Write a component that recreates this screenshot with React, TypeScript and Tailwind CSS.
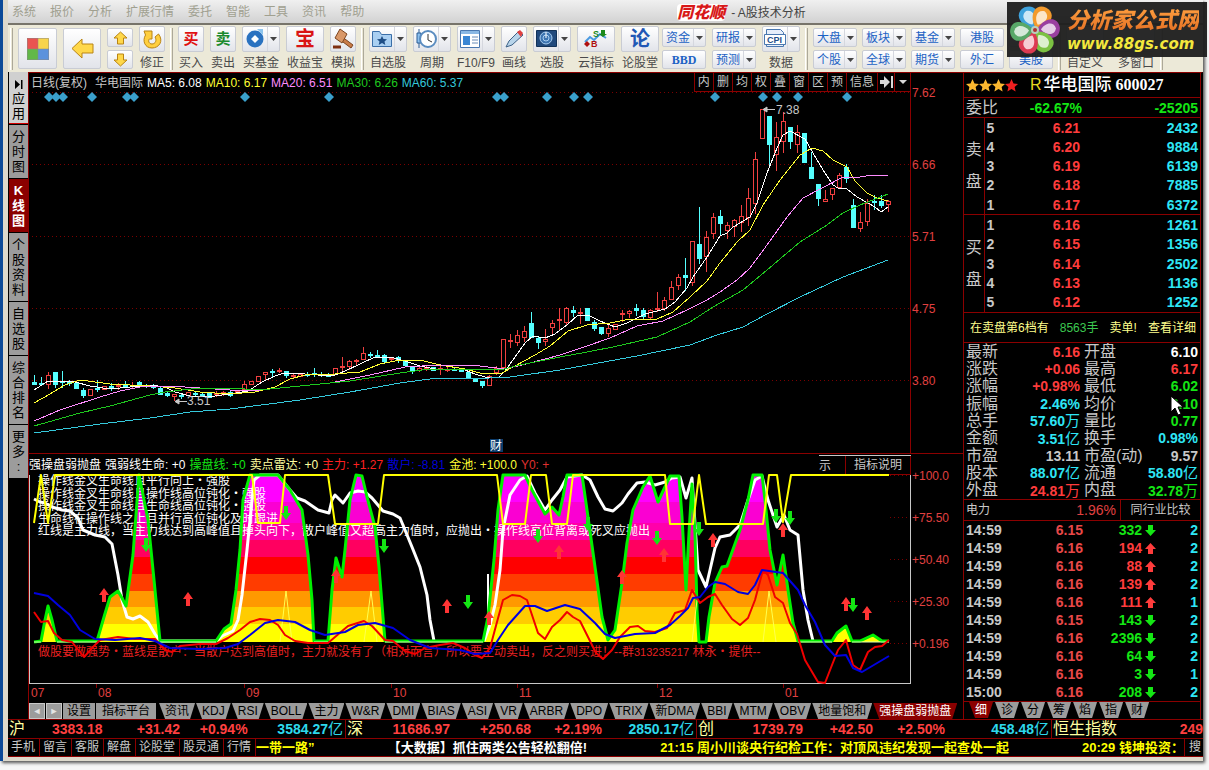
import type { ReactNode } from 'react'

type Point = [number, number]

const cjk = "font-['Liberation_Sans','Noto_Sans_CJK_SC',sans-serif]"

const menus = ['系统', '报价', '分析', '扩展行情', '委托', '智能', '工具', '资讯', '帮助']

const sideTabs = [
  { label: '分时图', active: false },
  { label: 'K线图', active: true },
  { label: '个股资料', active: false },
  { label: '自选股', active: false },
  { label: '综合排名', active: false },
  { label: '更多:', active: false },
]

// kind (u = rising, d = falling), high, body top, body bottom, low
type Candle = ['u' | 'd', number, number, number, number]

const candles: Candle[] = [
  ['d', 375, 382, 384, 384], ['d', 377, 383, 384, 384], ['u', 372, 375, 384, 388], ['d', 372, 372, 384, 387],
  ['d', 371, 381, 382, 387], ['d', 380, 382, 383, 385], ['d', 383, 383, 388, 388], ['d', 388, 390, 395, 397],
  ['u', 389, 389, 395, 395], ['d', 380, 388, 389, 391], ['u', 386, 386, 389, 389], ['d', 383, 386, 387, 390],
  ['u', 383, 385, 386, 389], ['d', 381, 385, 387, 387], ['u', 382, 385, 386, 388], ['d', 381, 382, 384, 387],
  ['d', 384, 385, 386, 387], ['d', 384, 386, 387, 388], ['d', 387, 388, 394, 394], ['d', 392, 393, 395, 396],
  ['u', 394, 394, 396, 400], ['d', 393, 395, 396, 398], ['u', 392, 392, 395, 395], ['d', 392, 393, 394, 396],
  ['d', 392, 394, 396, 396], ['d', 393, 393, 397, 397], ['u', 391, 393, 394, 396], ['u', 391, 392, 394, 395],
  ['d', 391, 392, 395, 396], ['u', 391, 391, 393, 393], ['u', 381, 384, 389, 389], ['u', 381, 381, 384, 384],
  ['u', 376, 376, 381, 381], ['u', 372, 372, 374, 379], ['d', 369, 371, 372, 376], ['u', 368, 370, 371, 372],
  ['d', 371, 371, 375, 377], ['u', 373, 375, 376, 377], ['u', 373, 374, 376, 376], ['d', 372, 374, 375, 376],
  ['d', 368, 373, 374, 376], ['d', 372, 374, 375, 376], ['d', 373, 375, 376, 376], ['u', 368, 368, 374, 374],
  ['u', 357, 366, 367, 370], ['u', 360, 361, 366, 369], ['u', 359, 360, 361, 364], ['u', 347, 353, 359, 359],
  ['d', 352, 354, 355, 357], ['d', 350, 355, 356, 357], ['d', 354, 355, 361, 363], ['u', 357, 358, 359, 361],
  ['d', 356, 357, 359, 362], ['d', 360, 361, 365, 366], ['d', 366, 367, 370, 373], ['u', 365, 368, 370, 371],
  ['u', 366, 367, 368, 370], ['d', 367, 367, 370, 370], ['u', 364, 368, 369, 374], ['u', 367, 369, 370, 371],
  ['d', 368, 369, 370, 370], ['d', 369, 370, 371, 371], ['d', 371, 372, 378, 378], ['d', 378, 378, 381, 381],
  ['d', 381, 381, 385, 387], ['u', 375, 376, 385, 385], ['u', 366, 368, 372, 374], ['u', 339, 339, 367, 367],
  ['u', 334, 340, 341, 347], ['u', 330, 335, 342, 345], ['u', 326, 331, 337, 341], ['d', 312, 323, 337, 337],
  ['d', 337, 338, 342, 348], ['u', 329, 339, 341, 345], ['u', 320, 323, 327, 333], ['u', 308, 319, 320, 330],
  ['u', 307, 308, 322, 325], ['d', 306, 310, 312, 316], ['u', 308, 312, 313, 323], ['d', 308, 308, 320, 320],
  ['d', 320, 322, 328, 330], ['d', 327, 327, 333, 334], ['u', 325, 328, 333, 336], ['u', 324, 324, 329, 329],
  ['u', 310, 313, 314, 321], ['u', 310, 311, 313, 317], ['d', 304, 308, 310, 315], ['d', 308, 310, 316, 318],
  ['u', 309, 310, 317, 318], ['u', 292, 308, 309, 311], ['u', 297, 300, 308, 310], ['u', 281, 287, 299, 299],
  ['u', 274, 277, 285, 289], ['d', 258, 275, 277, 290], ['u', 241, 241, 282, 285], ['d', 207, 244, 258, 263],
  ['u', 231, 237, 256, 271], ['u', 213, 217, 233, 238], ['d', 210, 216, 223, 234], ['u', 222, 225, 230, 238],
  ['u', 219, 220, 226, 236], ['u', 205, 216, 222, 231], ['u', 188, 198, 217, 225], ['u', 152, 159, 203, 213],
  ['u', 109, 109, 138, 138], ['d', 116, 116, 144, 165], ['u', 122, 137, 154, 170], ['u', 112, 121, 141, 152],
  ['d', 127, 127, 141, 148], ['u', 125, 132, 144, 152], ['d', 133, 133, 162, 162], ['d', 152, 167, 178, 178],
  ['d', 184, 184, 198, 205], ['u', 190, 199, 201, 201], ['u', 188, 188, 194, 199], ['u', 173, 175, 187, 187],
  ['d', 164, 167, 178, 182], ['d', 199, 205, 227, 227], ['u', 212, 222, 228, 231], ['u', 199, 203, 221, 225],
  ['d', 195, 201, 202, 209], ['d', 195, 201, 205, 207], ['u', 200, 201, 204, 211],
]

const averages: { color: string; points: Point[] }[] = [
  {
    color: '#fff',
    points: [
      [34, 390], [48, 381], [63, 381], [75, 382], [90, 386], [110, 389], [130, 387], [150, 385], [165, 387], [175, 392],
      [190, 396], [215, 396], [230, 394], [248, 391], [262, 382], [275, 376], [284, 373], [305, 374], [318, 375], [335, 375],
      [345, 371], [360, 364], [375, 357], [390, 357], [405, 361], [420, 366], [435, 369], [465, 370], [475, 374], [485, 377],
      [498, 378], [505, 371], [515, 357], [525, 343], [533, 336], [545, 338], [555, 334], [568, 324], [578, 315], [588, 315],
      [600, 321], [615, 327], [627, 323], [645, 314], [665, 309], [675, 302], [687, 288], [693, 277], [707, 257], [720, 236],
      [727, 233], [733, 227], [750, 217], [757, 203], [767, 173], [777, 148], [783, 135], [790, 131], [805, 139], [813, 153],
      [823, 170], [833, 185], [838, 188], [847, 189], [857, 197], [868, 203], [875, 207], [881, 212], [888, 207],
    ],
  },
  {
    color: '#ff3',
    points: [
      [34, 403], [50, 394], [65, 385], [80, 380], [110, 384], [150, 386], [175, 388], [200, 392], [230, 394], [255, 392],
      [275, 387], [290, 379], [305, 375], [335, 374], [360, 372], [380, 364], [395, 361], [420, 360], [440, 365], [465, 369],
      [480, 373], [500, 374], [515, 366], [535, 355], [550, 346], [568, 331], [587, 325], [610, 323], [630, 319], [657, 319],
      [673, 312], [690, 297], [707, 281], [720, 263], [737, 242], [750, 230], [763, 205], [780, 180], [800, 155], [812, 148],
      [823, 151], [833, 160], [847, 167], [855, 181], [867, 193], [877, 198], [888, 201],
    ],
  },
  {
    color: '#ff8cff',
    points: [
      [34, 421], [60, 410], [100, 397], [120, 391], [140, 387], [170, 386], [230, 390], [260, 390], [290, 387], [330, 383],
      [370, 375], [405, 367], [440, 365], [480, 366], [505, 369], [530, 363], [560, 355], [587, 346], [610, 338], [637, 326],
      [663, 321], [687, 310], [707, 300], [720, 292], [737, 280], [750, 268], [767, 245], [787, 217], [803, 198], [820, 189],
      [843, 177], [860, 177], [873, 175], [888, 175],
    ],
  },
  {
    color: '#1fc81f',
    points: [
      [34, 426], [80, 413], [110, 406], [150, 395], [165, 392], [200, 388], [230, 388], [260, 390], [300, 386], [350, 381],
      [400, 373], [430, 369], [470, 369], [500, 370], [520, 365], [560, 357], [587, 352], [613, 347], [657, 337], [690, 322],
      [713, 307], [743, 290], [767, 270], [800, 242], [827, 225], [843, 213], [860, 205], [888, 194],
    ],
  },
  {
    color: '#35c9dc',
    points: [
      [34, 433], [100, 424], [150, 418], [190, 412], [230, 409], [300, 400], [350, 392], [400, 383], [430, 379], [490, 378],
      [510, 377], [560, 370], [593, 364], [637, 356], [690, 345], [717, 335], [743, 327], [767, 314], [800, 297], [843, 277],
      [888, 260],
    ],
  },
]

const eventMarks = [49, 56, 63, 92, 127, 134, 245, 329, 497, 504, 547, 574, 588, 715, 763, 777, 798, 847]

const priceTicks = [
  { y: 92, label: '7.62' },
  { y: 164, label: '6.66' },
  { y: 236, label: '5.71' },
  { y: 308, label: '4.75' },
  { y: 380, label: '3.80' },
]

const strength: Point[] = [
  [34, 642], [41, 641], [45, 620], [48, 606], [52, 620], [57, 641], [97, 641], [104, 617], [110, 597], [118, 591],
  [122, 598], [126, 606], [133, 555], [139, 475], [148, 520], [154, 580], [160, 641], [216, 641], [224, 629], [231, 624],
  [236, 590], [240, 550], [243, 500], [250, 475], [278, 475], [290, 490], [302, 510], [308, 555], [312, 600], [314, 641],
  [328, 641], [332, 590], [336, 558], [342, 577], [345, 550], [350, 500], [356, 475], [362, 476], [367, 497], [375, 527],
  [379, 567], [383, 617], [385, 641], [483, 641], [488, 617], [494, 560], [498, 510], [503, 475], [525, 475], [532, 490],
  [545, 514], [552, 507], [559, 515], [563, 497], [567, 475], [582, 475], [588, 517], [595, 567], [602, 617], [608, 640],
  [615, 630], [622, 583], [627, 543], [633, 510], [643, 487], [650, 476], [658, 502], [670, 476], [679, 476], [682, 517],
  [686, 590], [689, 533], [692, 484], [695, 533], [697, 610], [699, 642], [706, 642], [709, 617], [715, 583], [722, 567],
  [727, 566], [740, 530], [748, 500], [753, 475], [762, 475], [765, 500], [770, 550], [777, 585], [783, 555], [788, 590],
  [793, 623], [798, 641], [832, 641], [837, 633], [846, 626], [852, 641], [860, 641], [873, 635], [882, 641], [889, 641],
]

const lifeLine: Point[] = [
  [34, 499], [40, 502], [45, 503], [52, 507], [62, 510], [70, 511], [78, 518], [83, 530], [95, 535], [105, 537],
  [112, 544], [118, 575], [122, 600], [127, 617], [133, 619], [140, 616], [148, 622], [155, 634], [160, 641], [216, 641],
  [222, 636], [233, 631], [238, 620], [242, 595], [247, 550], [250, 520], [254, 480], [260, 475], [278, 475], [290, 490],
  [297, 498], [305, 501], [318, 510], [329, 513], [332, 500], [335, 495], [343, 503], [350, 493], [358, 491], [365, 492],
  [372, 498], [383, 511], [393, 514], [400, 518], [405, 530], [412, 547], [420, 567], [427, 595], [430, 620], [434, 641],
  [484, 641], [490, 625], [495, 605], [500, 570], [503, 530], [510, 495], [520, 480], [527, 476], [535, 493], [545, 510],
  [552, 500], [560, 490], [567, 477], [582, 475], [590, 480], [598, 497], [605, 509], [613, 511], [622, 503], [628, 494],
  [637, 483], [645, 482], [655, 485], [665, 482], [672, 478], [680, 477], [686, 498], [692, 478], [698, 570], [706, 587],
  [710, 570], [715, 548], [720, 537], [730, 535], [740, 525], [748, 500], [755, 480], [762, 476], [768, 500], [777, 527],
  [784, 515], [790, 530], [798, 535], [803, 590], [808, 620], [813, 641],
]

const goldPool: Point[] = [
  [34, 523], [41, 475], [48, 523], [55, 475], [252, 475], [258, 523], [280, 523], [285, 475], [328, 475], [335, 524],
  [378, 524], [384, 475], [497, 475], [503, 524], [525, 524], [531, 475], [546, 475], [552, 524], [567, 524], [573, 475],
  [665, 475], [670, 524], [693, 524], [699, 475], [706, 524], [763, 524], [769, 475], [777, 475], [783, 522], [791, 475],
  [889, 475],
]

const mainForce: Point[] = [
  [34, 612], [41, 622], [48, 621], [54, 633], [62, 640], [72, 642], [84, 657], [95, 645], [100, 640], [118, 637],
  [135, 639], [155, 639], [165, 650], [172, 652], [180, 646], [200, 644], [216, 644], [228, 638], [240, 630], [250, 622],
  [260, 619], [270, 620], [278, 625], [285, 635], [295, 641], [308, 643], [328, 643], [335, 637], [348, 626], [364, 621],
  [372, 626], [385, 640], [393, 641], [405, 651], [415, 654], [425, 648], [440, 645], [453, 643], [465, 648], [475, 655],
  [482, 658], [490, 648], [497, 622], [503, 600], [512, 595], [520, 596], [527, 600], [533, 618], [538, 633], [545, 639],
  [552, 627], [560, 620], [567, 612], [573, 617], [580, 621], [588, 637], [596, 653], [603, 659], [612, 650], [620, 637],
  [630, 627], [638, 626], [645, 631], [655, 632], [667, 628], [675, 613], [685, 610], [692, 590], [700, 603], [708, 597],
  [715, 594], [722, 605], [732, 619], [740, 625], [748, 618], [755, 600], [763, 570], [768, 575], [775, 597], [783, 603],
  [790, 623], [797, 634], [805, 660], [818, 682], [825, 683], [832, 665], [838, 650], [846, 640], [853, 665], [860, 670],
  [868, 652], [875, 647], [882, 646], [889, 640],
]

const retail: Point[] = [
  [34, 593], [48, 596], [58, 605], [70, 615], [80, 630], [95, 639], [115, 640], [140, 638], [155, 641], [170, 648],
  [200, 649], [225, 648], [238, 644], [250, 635], [265, 623], [278, 620], [295, 622], [310, 630], [325, 635], [345, 632],
  [358, 625], [375, 623], [393, 628], [410, 640], [430, 648], [460, 650], [475, 654], [490, 653], [498, 640], [508, 625],
  [525, 606], [535, 606], [547, 611], [565, 605], [580, 609], [595, 623], [605, 634], [615, 638], [635, 634], [655, 633],
  [670, 625], [680, 616], [688, 608], [693, 598], [700, 597], [708, 587], [715, 582], [725, 584], [738, 592], [748, 594],
  [755, 585], [762, 570], [783, 573], [798, 590], [805, 605], [815, 622], [825, 645], [835, 656], [846, 655], [853, 668],
  [862, 672], [889, 656],
]

const bands = [
  { y: 474, h: 28, color: '#ff00ff' },
  { y: 502, h: 21, color: '#fa00d2' },
  { y: 523, h: 17, color: '#ff00aa' },
  { y: 540, h: 17, color: '#ff0060' },
  { y: 557, h: 17, color: '#ff0000' },
  { y: 574, h: 17, color: '#ff3c00' },
  { y: 591, h: 16, color: '#ff9900' },
  { y: 607, h: 17, color: '#ffcc00' },
  { y: 624, h: 18, color: '#ffff00' },
]

const upArrows: Point[] = [
  [104, 595], [188, 599], [336, 576], [447, 606], [489, 618], [559, 552], [664, 555], [622, 577], [713, 540], [783, 530],
  [846, 604], [867, 613],
]

const downArrows: Point[] = [
  [146, 545], [286, 513], [384, 546], [468, 602], [538, 536], [588, 524], [657, 538], [699, 529], [776, 516], [790, 518],
  [853, 605],
]

const oscTicks = [
  { y: 475, label: '+100.0' },
  { y: 517, label: '+75.50' },
  { y: 559, label: '+50.40' },
  { y: 601, label: '+25.30' },
  { y: 643, label: '+0.196' },
]

const months = [
  { x: 30, label: '07' },
  { x: 97, label: '08' },
  { x: 245, label: '09' },
  { x: 392, label: '10' },
  { x: 518, label: '11' },
  { x: 658, label: '12' },
  { x: 784, label: '01' },
]

const notes = [
  '操作线金叉生命线且平行向上・强股',
  '操作线金叉生命线且操作线高位钝化・强股',
  '操作线金叉生命线且生命线高位钝化・强股',
  '生命线在操作线之上且并行高位钝化及时跟进',
  '红线是主力线，当主力线达到高峰值且掉头向下，散户峰值又超高主力值时，应抛出・操作线高位背离或死叉应抛出',
]

const indicatorTabs = [
  '资讯', 'KDJ', 'RSI', 'BOLL', '主力', 'W&R', 'DMI', 'BIAS', 'ASI', 'VR', 'ARBR', 'DPO', 'TRIX', '新DMA', 'BBI', 'MTM',
  'OBV', '地量饱和',
]

const asks = [
  ['5', '6.21', '2432'],
  ['4', '6.20', '9884'],
  ['3', '6.19', '6139'],
  ['2', '6.18', '7885'],
  ['1', '6.17', '6372'],
]

const bids = [
  ['1', '6.16', '1261'],
  ['2', '6.15', '1356'],
  ['3', '6.14', '2502'],
  ['4', '6.13', '1136'],
  ['5', '6.12', '1252'],
]

const red = 'text-[#ff3c3c]'
const green = 'text-[#14e614]'
const cyan = 'text-[#2ee6f5]'
const gray = 'text-[#c8c8c8]'

const stats = [
  ['最新', '6.16', red, '开盘', '6.10', 'text-white'],
  ['涨跌', '+0.06', red, '最高', '6.17', red],
  ['涨幅', '+0.98%', red, '最低', '6.02', green],
  ['振幅', '2.46%', cyan, '均价', '6.10', green],
  ['总手', '57.60万', cyan, '量比', '0.77', green],
  ['金额', '3.51亿', cyan, '换手', '0.98%', cyan],
  ['市盈', '13.11', gray, '市盈(动)', '9.57', gray],
  ['股本', '88.07亿', cyan, '流通', '58.80亿', cyan],
  ['外盘', '24.81万', red, '内盘', '32.78万', green],
]

const trades = [
  { time: '14:59', price: '6.15', volume: '332', up: false, count: '2' },
  { time: '14:59', price: '6.16', volume: '194', up: true, count: '2' },
  { time: '14:59', price: '6.16', volume: '88', up: true, count: '2' },
  { time: '14:59', price: '6.16', volume: '139', up: true, count: '2' },
  { time: '14:59', price: '6.16', volume: '111', up: true, count: '1' },
  { time: '14:59', price: '6.15', volume: '143', up: false, count: '2' },
  { time: '14:59', price: '6.16', volume: '2396', up: false, count: '2' },
  { time: '14:59', price: '6.16', volume: '64', up: false, count: '2' },
  { time: '14:59', price: '6.16', volume: '3', up: false, count: '1' },
  { time: '15:00', price: '6.16', volume: '208', up: false, count: '2' },
]

const indices = [
  { name: '沪', values: ['3383.18', '+31.42', '+0.94%'], amount: '3584.27', cols: 'grid-cols-[16px_78fr_78fr_68fr_96fr]' },
  { name: '深', values: ['11686.97', '+250.68', '+2.19%'], amount: '2850.17', cols: 'grid-cols-[16px_87fr_81fr_71fr_92fr]' },
  { name: '创', values: ['1739.79', '+42.50', '+2.50%'], amount: '458.48', cols: 'grid-cols-[16px_89fr_70fr_72fr_104fr]' },
]

const toPath = (points: Point[]) => points.map(([x, y]) => `${x},${y}`).join(' ')

function Separator() {
  return <span className="-mx-px h-[42px] w-[3px] shrink-0 self-center border-x border-l-white border-r-[#aca899]" />
}

const faceStyle = 'rounded-[2px] border border-[#c9ccd4] bg-linear-to-b from-white to-[#e2e4ea]'

function Caret() {
  return (
    <span className="flex w-3 shrink-0 items-center justify-center self-stretch border-l border-[#d5d7de]">
      <svg width="7" height="4" viewBox="0 0 7 4"><path d="M0 0h7L3.5 4z" fill="#444" /></svg>
    </span>
  )
}

function Tool({ label, caret, children }: { label: string; caret?: boolean; children: ReactNode }) {
  const width = caret || label.length > 2 ? 'w-[38px]' : 'w-[26px]'
  return (
    <button type="button" className={`flex shrink-0 flex-col items-center gap-0.5 text-xs leading-[18px] whitespace-nowrap text-[#4a4a4a] ${width}`}>
      <span className={`flex h-[26px] w-full items-center ${faceStyle}`}>
        <span className="flex flex-1 items-center justify-center">{children}</span>
        {caret && <Caret />}
      </span>
      {label}
    </button>
  )
}

function SmallTool({ label, caret = true }: { label: string; caret?: boolean }) {
  return (
    <button type="button" className={`flex h-[19px] w-11 items-center text-xs leading-none text-[#1c62c4] ${faceStyle}`}>
      <span className={`flex-1 text-center whitespace-nowrap ${label === 'BBD' ? "font-['Liberation_Serif',serif] font-bold" : ''}`}>{label}</span>
      {caret && <Caret />}
    </button>
  )
}

function ToolPair({ top, bottom, caret = true, caretBottom = caret }: { top: string; bottom: string; caret?: boolean; caretBottom?: boolean }) {
  return (
    <div className="flex shrink-0 flex-col gap-[3px]">
      <SmallTool label={top} caret={caret} />
      <SmallTool label={bottom} caret={caretBottom} />
    </div>
  )
}

function VerticalArrow({ down }: { down?: boolean }) {
  return (
    <svg width="15" height="14" viewBox="0 0 15 14" className={down ? 'rotate-180' : ''}>
      <path d="M7.5 1 14 7h-3.5v6h-6V7H1z" fill="#ffd84a" stroke="#b98414" />
    </svg>
  )
}

function Toolbar() {
  return (
    <div className="flex h-[49px] items-center overflow-hidden border-t-2 border-[#77746a] bg-[#ece9d8] pl-[3px]">
      <div className="flex items-center gap-[6px]">
        <Separator />
        <button type="button" aria-label="主页" className={`flex h-[41px] w-[39px] items-center justify-center ${faceStyle}`}>
          <svg width="22" height="22" viewBox="0 0 22 22">
            <path d="M0 0h11v11H0z" fill="#ea5450" />
            <path d="M11 0h11v11H11z" fill="#f8d44c" />
            <path d="M0 11h11v11H0z" fill="#62b848" />
            <path d="M11 11h11v11H11z" fill="#5c92dc" />
            <path d="M.5.5h21v21H.5zM11 0v22M0 11h22" fill="none" stroke="#888" strokeOpacity=".5" />
          </svg>
        </button>
        <button type="button" aria-label="后退" className={`flex h-[41px] w-[38px] items-center justify-center ${faceStyle}`}>
          <svg width="23" height="21" viewBox="0 0 23 21">
            <path d="M1 10.5 11 1v5h11v9H11v5z" fill="#ffd84a" stroke="#b98414" />
          </svg>
        </button>
        <div className="flex w-[26px] flex-col gap-[3px]">
          <button type="button" aria-label="上一个" className={`flex h-[19px] items-center justify-center ${faceStyle}`}><VerticalArrow /></button>
          <button type="button" aria-label="下一个" className={`flex h-[19px] items-center justify-center ${faceStyle}`}><VerticalArrow down /></button>
        </div>
        <Tool label="修正">
          <svg width="20" height="20" viewBox="0 0 20 20">
            <path
              d="M2 2h8v8H7.500C6 11 6.500 15 10 15s5-4 3-7l3.500-3C22 12 17 19 10 19S0 12 3.500 6z"
              fill="#ffcf3f"
              stroke="#b98414"
            />
          </svg>
        </Tool>
        <Separator />
        <Tool label="买入"><b className="text-[15px] leading-none text-[#e01010]">买</b></Tool>
        <Tool label="卖出"><b className="text-[15px] leading-none text-[#1a8a2e]">卖</b></Tool>
        <Tool label="买基金" caret>
          <svg width="18" height="19" viewBox="0 0 18 19">
            <circle cx="9" cy="10" r="8.5" fill="#2a72c0" />
            <path d="M11 0h6v6z" fill="#8cc4ee" />
            <path d="m9 6 4 4-4 4-4-4z" fill="#fff" />
          </svg>
        </Tool>
        <Tool label="收益宝"><b className="text-xl leading-none text-[#d91414]">宝</b></Tool>
        <Tool label="模拟">
          <svg width="22" height="21" viewBox="0 0 22 21">
            <path d="m9 8 12 9-2 3L7 11z" fill="#c87b48" stroke="#7d4520" />
            <path d="m8 1 7 5-5 9-7-5z" fill="#d99868" stroke="#7d4520" />
            <path d="M1 19h8" stroke="#7d2f12" strokeWidth="3" />
          </svg>
        </Tool>
        <Separator />
        <Tool label="自选股" caret>
          <svg width="20" height="19" viewBox="0 0 20 19">
            <path d="M.5 2.5h7l2 3h10v12H.5z" fill="#a9cff2" stroke="#3a6ea8" />
            <path d="m10 7 1.500 3 3.500.3-2.500 2.200.8 3.500-3.300-2-3.300 2 .8-3.500L5 10.300l3.500-.3z" fill="#1f4e86" />
          </svg>
        </Tool>
        <Tool label="周期" caret>
          <svg width="21" height="20" viewBox="0 0 21 20">
            <path d="M3 0v19" stroke="#2a5c94" />
            <path d="M1 4h4v10H1z" fill="#8cc0ee" stroke="#2a5c94" />
            <circle cx="12" cy="10" r="8" fill="#fff" stroke="#5a8cc0" strokeWidth="2" />
            <path d="M12 5v6l4 2" fill="none" stroke="#333" />
          </svg>
        </Tool>
        <Tool label="F10/F9" caret>
          <svg width="20" height="18" viewBox="0 0 20 18">
            <path d="M.5.5h19v17H.5z" fill="#fff" stroke="#4a78b0" />
            <path d="M1 1h18v3H1z" fill="#8ab8e4" />
            <path d="M3 6h7v9H3z" fill="#3a86d4" />
            <path d="M12 7h6M12 10h6M12 13h6" stroke="#6a8cb8" />
          </svg>
        </Tool>
        <Tool label="画线">
          <svg width="20" height="20" viewBox="0 0 20 20">
            <path d="M15 2 5 12l-3 6 6-2L19 6z" fill="#b8d4ea" stroke="#3e6288" />
            <path d="m13 3 3-2 3 3-2 4z" fill="#e04040" />
          </svg>
        </Tool>
        <Tool label="选股" caret>
          <svg width="21" height="17" viewBox="0 0 21 17">
            <path d="M.5.5h20v16H.5z" fill="#20497c" stroke="#123258" />
            <circle cx="10" cy="8" r="6" fill="#3d74b0" stroke="#a9cff2" />
            <circle cx="10" cy="8" r="3" fill="none" stroke="#a9cff2" />
            <path d="M10 8V2" stroke="#fff" />
          </svg>
        </Tool>
        <Tool label="云指标">
          <svg width="26" height="22" viewBox="0 0 26 22" className="overflow-visible">
            <path d="M2 14 7 9l4 3 6-6 6 4" fill="none" stroke="#4a9ae0" strokeWidth="2" />
            <text x="10" y="9" fontSize="9" fontWeight="700" fill="#1c8a1c">S</text>
            <path d="M18 2h4v4h2l-4 3-4-3h2z" fill="#1c8a1c" />
            <text x="8" y="19" fontSize="9" fontWeight="700" fill="#b01010">B</text>
            <path d="m1 16 3-3 3 3-3 3z" fill="#b01010" />
          </svg>
        </Tool>
        <Tool label="论股堂"><b className="text-xl leading-none text-[#2157b5]">论</b></Tool>
      </div>
      <div className="ml-[3px] flex items-center gap-[6px]">
        <ToolPair top="资金" bottom="BBD" caretBottom={false} />
        <ToolPair top="研报" bottom="预测" />
        <Tool label="数据" caret>
          <svg width="22" height="20" viewBox="0 0 22 20">
            <path d="M2.5.5h14l3 3v14h-17z" fill="#e6eefa" stroke="#4a78b0" />
            <path d="M.5 5.5h21v10H.5z" fill="#fff" stroke="#4a78b0" />
            <text x="3" y="14" fontSize="9" fontWeight="700" fill="#24508c">CPI</text>
          </svg>
        </Tool>
        <Separator />
        <div className="flex items-center gap-[5px]">
          <ToolPair top="大盘" bottom="个股" />
          <ToolPair top="板块" bottom="全球" />
          <ToolPair top="基金" bottom="期货" />
          <ToolPair top="港股" bottom="外汇" caret={false} />
          <ToolPair top="指数" bottom="美股" caret={false} />
        </div>
        <Separator />
        <Tool label="自定义">{null}</Tool>
        <span className="w-px" />
        <Tool label="多窗口">{null}</Tool>
        <Separator />
      </div>
    </div>
  )
}

function SiteBadge() {
  const petals = [
    { angle: -25, color: '#3fa2dc' },
    { angle: 27, color: '#f39a2c' },
    { angle: 85, color: '#9a3fa0' },
    { angle: 145, color: '#7cc242' },
    { angle: 205, color: '#dc3a52' },
    { angle: 265, color: '#58a868' },
  ]
  return (
    <div className="absolute top-0.5 right-0.5 flex h-[55px] w-[200px] items-center gap-1.5 bg-[#1e1e1e]/95 pl-0.5">
      <svg width="52" height="52" viewBox="-26 -26 52 52" className="shrink-0">
        {petals.map((p) => (
          <g key={p.angle} transform={`rotate(${p.angle})`}>
            <path d="M0-2C-11-8-14-24 0-25 14-24 11-8 0-2z" fill={p.color} />
            <path d="M0-6C-6-10-8-19 0-21 8-19 6-10 0-6z" fill="#fff" fillOpacity=".75" />
          </g>
        ))}
        <circle r="4" fill="#b8cdbb" />
        <circle r="2" fill="#b03030" />
      </svg>
      <div className="whitespace-nowrap">
        <div className="bg-linear-to-b from-[#ffa040] to-[#e06a20] bg-clip-text text-[22px] leading-[28px] font-black text-transparent italic">分析家公式网</div>
        <div className="font-['DejaVu_Sans',sans-serif] text-[15px] leading-[18px] font-bold text-[#f4e83c] italic">www.88gs.com</div>
      </div>
    </div>
  )
}

function SideBar() {
  return (
    <nav className="flex w-[21px] shrink-0 flex-col gap-px border-r border-[#8b0000] bg-black pl-px text-[13px] leading-[15px]">
      <button type="button" className="flex h-[52px] flex-col items-center border-b border-[#d40000] bg-[#d0d0d0] pt-1.5 text-black">
        <svg width="8" height="9" viewBox="0 0 8 9" className="my-0.5"><path d="M0 0l5 4.5L0 9zM6 0h1.5v9H6z" /></svg>
        <span className="w-[13px] break-all">应用</span>
      </button>
      {sideTabs.map((tab) => (
        <button
          type="button"
          key={tab.label}
          className={`py-1 ${tab.active ? 'bg-[#8b0000] font-bold text-white' : 'bg-[#9c9c9c] text-black'}`}
        >
          {tab.label.split('').map((char) => (
            <span key={char} className="block">{char}</span>
          ))}
        </button>
      ))}
    </nav>
  )
}

function ChartHeader() {
  return (
    <div className="flex h-5 items-center justify-between border-t border-[#8b0000] pr-[52px] text-xs whitespace-nowrap">
      <div className="flex items-center gap-1 pl-0.5">
        <span className="mr-1 text-[#c8c8c8]">日线(复权)</span>
        <span className="text-[#c8c8c8]">华电国际</span>
        <span className="text-white">MA5: 6.08</span>
        <span className="text-[#ff3]">MA10: 6.17</span>
        <span className="text-[#ff8cff]">MA20: 6.51</span>
        <span className="text-[#1fc81f]">MA30: 6.26</span>
        <span className="text-[#35c9dc]">MA60: 5.37</span>
      </div>
      <div className="flex h-full text-[#c8c8c8]">
        {['内', '删', '均', '权', '叠', '窗', '区', '预', '信息'].map((label) => (
          <button type="button" key={label} className="border-b border-l border-[#8b0000] px-[3px]">{label}</button>
        ))}
        <button type="button" aria-label="前进" className="flex w-[17px] items-center justify-center border-b border-l border-[#8b0000]">
          <svg width="13" height="12" viewBox="0 0 13 12" fill="#d8d8d8"><path d="M0 4h4V0l6 6-6 6V8H0zM11 0h2v12h-2z" /></svg>
        </button>
        <button type="button" aria-label="更多" className="flex w-[17px] items-center justify-center border-x border-b border-[#8b0000]">
          <svg width="8" height="4" viewBox="0 0 8 4" fill="#d8d8d8"><path d="M0 0h8L4 4z" /></svg>
        </button>
      </div>
    </div>
  )
}

function PriceChart() {
  return (
    <svg viewBox="29 92 934 363" className="block h-auto w-full overflow-visible" fontSize="12">
      <g shapeRendering="crispEdges">
        {priceTicks.map((tick) => (
          <path key={tick.y} d={`M32 ${tick.y + 0.5}H910`} stroke="#7a0000" strokeDasharray="1 3" />
        ))}
        <path d="M910.5 92V454M29 453.5H963" stroke="#8b0000" />
        {candles.map(([kind, high, top, bottom, low], i) => {
          const x = 34 + i * 7
          const color = kind === 'u' ? '#f04040' : '#5ff'
          return (
            <g key={i} fill={kind === 'u' ? '#000' : color} stroke={color}>
              <path d={`M${x + 0.5} ${high}V${low + 1}`} />
              <rect x={x - 1.5} y={top + 0.5} width="4" height={Math.max(bottom - top, 0.5)} />
            </g>
          )
        })}
        {averages.map((line) => (
          <polyline key={line.color} points={toPath(line.points)} fill="none" stroke={line.color} />
        ))}
      </g>
      {eventMarks.map((x) => (
        <path key={x} d={`M${x} 92l5 5-5 5-5-5z`} fill="#3aa0cc" />
      ))}
      {priceTicks.map((tick) => (
        <text key={tick.y} x="912" y={tick.y + 5} fill="#e04040">{tick.label}</text>
      ))}
      <g fill="#c8c8c8" stroke="#c8c8c8">
        <path d="M763 109.5h12M763 109.5l4-2.5v5zM175 401.5h12M175 401.5l4-2.5v5z" />
        <text x="776" y="114" stroke="none">7.38</text>
        <text x="187" y="405" stroke="none">3.51</text>
      </g>
      <path d="M490 439h13v13h-13z" fill="#0c3c6c" />
      <text x="490" y="450" fill="#fff">财</text>
    </svg>
  )
}

function IndicatorHeader() {
  return (
    <div className="flex h-5 items-center justify-between pr-[52px] text-xs whitespace-nowrap">
      <div className="flex gap-1">
        <span className="text-white">强操盘弱抛盘</span>
        <span className="text-white">强弱线生命: +0</span>
        <span className="text-[#14e614]">操盘线: +0</span>
        <span className="text-[#ffffa0]">卖点雷达: +0</span>
        <span className="text-[#ff2020]">主力: +1.27</span>
        <span className="text-[#0000d8]">散户: -8.81</span>
        <span className="text-[#ff3]">金池: +100.0</span>
        <span className="text-[#e03030]">Y0: +</span>
      </div>
      <div className="flex h-full items-stretch border-t border-[#c8c8c8] text-[#c8c8c8]">
        <span className="flex w-[27px] items-center border-r border-[#8b0000]">示</span>
        <button type="button" className="border-r border-b border-[#8b0000] px-2">指标说明</button>
      </div>
    </div>
  )
}

function IndicatorChart() {
  return (
    <svg viewBox="29 475 934 228" className="block h-auto w-full overflow-visible" fontSize="12">
      <clipPath id="strength-area">
        <polygon points={`34,642 ${toPath(strength)} 889,642`} />
      </clipPath>
      <g shapeRendering="crispEdges">
        <path d="M29.5 475V683.5H910.5V475" fill="none" stroke="#c8c8c8" />
        {oscTicks.map((tick) => (
          <path key={tick.y} d={`M890 ${tick.y + 0.5}H910`} stroke="#7a0000" strokeDasharray="1 3" />
        ))}
        {months.slice(1).map((m) => (
          <path key={m.x} d={`M${m.x - 0.5} 684v4`} stroke="#8b0000" />
        ))}
        <g clipPath="url(#strength-area)">
          {bands.map((band) => (
            <rect key={band.y} x="34" y={band.y} width="856" height={band.h} fill={band.color} />
          ))}
        </g>
      </g>
      <g fill="#fff">
        {notes.map((note, i) => (
          <text key={note} x="38" y={485 + Math.round(i * 12.5)}>{note}</text>
        ))}
      </g>
      <text x="38" y="656" fill="#e82020">
        做股要做强势・蓝线是散户：当散户达到高值时，主力就没有了（相对而言）所以要主动卖出，反之则买进！--群
        <tspan fontSize="11">313235217</tspan> 林永・提供--
      </text>
      <g fill="none" strokeLinejoin="round">
        <polyline points={toPath(lifeLine.slice(0, 50))} stroke="#fff" strokeWidth="3" />
        <polyline points={toPath(lifeLine.slice(50))} stroke="#fff" strokeWidth="3" />
        <path d="M488 574v46" stroke="#fff" strokeWidth="2" />
        <polyline points={toPath(strength)} stroke="#00f000" strokeWidth="3" />
        <path d="M34 642H41M57 642H97M160 642H216M314 642H328M385 642H483M798 642H832M852 642H889" stroke="#d8ffb0" />
        <path d="M280 642 286 591 292 642M364 642 371 591 377 642M692 642 697 600M763 642 769 591 776 642" stroke="#ffff50" />
        <polyline points={toPath(goldPool)} stroke="#ffff00" strokeWidth="2" />
        <polyline points={toPath(mainForce)} stroke="#f00000" strokeWidth="2" />
        <polyline points={toPath(retail)} stroke="#0000e0" strokeWidth="2" />
      </g>
      {upArrows.map(([x, y]) => (
        <path key={`${x}-${y}`} d={`M${x} ${y - 7}l5 7h-3v7h-4v-7h-3z`} fill="#ff3434" />
      ))}
      {downArrows.map(([x, y]) => (
        <path key={`${x}-${y}`} d={`M${x} ${y + 7}l5-7h-3v-7h-4v7h-3z`} fill="#14e614" />
      ))}
      <g fill="#e04040">
        {oscTicks.map((tick) => (
          <text key={tick.y} x="912" y={tick.y + 5}>{tick.label}</text>
        ))}
        {months.map((m) => (
          <text key={m.x} x={m.x + 1} y="697">{m.label}</text>
        ))}
      </g>
    </svg>
  )
}

const slanted = '[clip-path:polygon(1px_0,100%_0,calc(100%-5px)_100%,7px_100%)]'

function SlantedTab({ label, active }: { label: string; active?: boolean }) {
  return (
    <button type="button" className={`pr-1.5 pl-[7px] ${slanted} ${active ? 'bg-[#8b0000] text-white' : 'bg-[#9c9c9c] text-black'}`}>
      {label}
    </button>
  )
}

function IndicatorTabs() {
  return (
    <div className="flex h-4 text-xs leading-4 whitespace-nowrap">
      <div className="mr-0.5 flex gap-px text-black">
        {['◄', '►'].map((label) => (
          <button type="button" key={label} className="w-4 border border-[#c8c8c8] bg-[#9c9c9c] text-[9px] leading-none text-[#e4e4e4]">{label}</button>
        ))}
        <button type="button" className="bg-[#9c9c9c] px-1">设置</button>
        <button type="button" className="bg-[#9c9c9c] px-1.5">指标平台</button>
      </div>
      {indicatorTabs.map((label) => (
        <SlantedTab key={label} label={label} />
      ))}
      <SlantedTab label="强操盘弱抛盘" active />
    </div>
  )
}

function Star({ color }: { color: string }) {
  return (
    <svg width="13" height="13" viewBox="0 0 13 13">
      <path d="m6.5 0 2 4.500 4.500.4-3.400 3 1 4.600-4.100-2.400-4.100 2.400 1-4.600L0 4.900l4.500-.4z" fill={color} />
    </svg>
  )
}

function DepthRows({ title, rows }: { title: string; rows: string[][] }) {
  return (
    <tbody className="border-b border-[#8b0000]">
      {rows.map(([level, price, volume], i) => (
        <tr key={level}>
          {i === 0 && (
            <th rowSpan={5} scope="rowgroup" className="border-r border-[#8b0000] text-base leading-8 font-normal">
              <span className="mx-auto block w-4 break-all">{title}</span>
            </th>
          )}
          <td className="pl-0.5 leading-none">{level}</td>
          <td className="text-right leading-none text-[#ff3c3c]">{price}</td>
          <td className="pr-0.5 text-right leading-none text-[#2ee6f5]">{volume}</td>
        </tr>
      ))}
    </tbody>
  )
}

function Amount({ value }: { value: string }) {
  const unit = value.match(/[万亿]/)?.[0]
  return (
    <>
      {value.replace(/[万亿]/, '')}
      {unit && <span className="text-[15px] font-normal">{unit}</span>}
    </>
  )
}

function QuotePanel() {
  return (
    <aside className="flex w-60 shrink-0 flex-col border-t border-r-2 border-t-[#8b0000] border-r-black text-sm">
      <div className="flex flex-1 flex-col border-r border-l border-[#8b0000] font-bold text-[#c8c8c8]">
        <h1 className="flex h-6 items-center pl-0.5 whitespace-nowrap text-white">
          <Star color="#fbb830" />
          <Star color="#fbb830" />
          <Star color="#fbb830" />
          <Star color="#f02020" />
          <span className="ml-3 text-base font-normal text-[#e6d820]">R</span>
          <span className="ml-0.5 text-[17px] font-medium">华电国际</span>
          <span className="ml-1 font-['Liberation_Serif',serif] text-base">600027</span>
        </h1>
        <div className="flex h-[21px] items-center border-y border-[#8b0000] pr-0.5 pl-0.5">
          <span className="w-[34px] text-base leading-none font-normal">委比</span>
          <span className="w-[82px] text-right text-[#14e614]">-62.67%</span>
          <span className="flex-1 text-right text-[#14e614]">-25205</span>
        </div>
        <table className="h-[195px] w-full table-fixed border-collapse">
          <colgroup>
            <col className="w-5" />
            <col className="w-3.5" />
            <col className="w-[82px]" />
            <col />
          </colgroup>
          <DepthRows title="卖盘" rows={asks} />
          <DepthRows title="买盘" rows={bids} />
        </table>
        <div className="flex h-[30px] items-center justify-between border-b border-[#8b0000] pr-1 pl-1.5 text-xs font-normal whitespace-nowrap text-[#ffff8c]">
          <span>在卖盘第6档有</span>
          <span className="text-[#3cc850]">8563手</span>
          <span>卖单!</span>
          <a href="#detail">查看详细</a>
        </div>
        <dl className="grid h-[157px] grid-cols-[34px_84px_64px_1fr] items-center border-b border-[#8b0000] px-0.5 leading-none whitespace-nowrap">
          {stats.map(([a, av, ac, b, bv, bc]) => (
            <div key={a} className="contents">
              <dt className="text-base leading-none font-normal">{a}</dt>
              <dd className={`pr-1 text-right leading-none ${ac}`}><Amount value={av} /></dd>
              <dt className="text-base leading-none font-normal">{b}</dt>
              <dd className={`text-right leading-none ${bc}`}><Amount value={bv} /></dd>
            </div>
          ))}
        </dl>
        <div className="flex h-[21px] items-stretch border-b border-[#8b0000] text-xs leading-5 font-normal">
          <span className="flex-1 pl-0.5">电力</span>
          <span className="pr-1 text-sm leading-5 text-[#e04040]">1.96%</span>
          <button type="button" className="w-20 border-l border-[#8b0000]">同行业比较</button>
        </div>
        <table className="w-full border-collapse">
          <tbody>
            {trades.map((trade, i) => (
              <tr key={i} className="h-[18px] leading-none">
                <td className="pl-0.5">{trade.time}</td>
                <td className="w-[60px] text-right text-[#e84848]">{trade.price}</td>
                <td className={`w-[59px] text-right ${trade.up ? red : green}`}>{trade.volume}</td>
                <td className="w-4">
                  <svg width="11" height="11" viewBox="0 0 11 11" className={`ml-[3px] ${trade.up ? '' : 'rotate-180'}`}>
                    <path d="M5.5 0 11 6H8v5H3V6H0z" fill={trade.up ? '#ff3c3c' : '#14e614'} />
                  </svg>
                </td>
                <td className="w-[42px] pr-0.5 text-right text-[#2ee6f5]">{trade.count}</td>
              </tr>
            ))}
          </tbody>
        </table>
        <div className="mt-auto flex h-[18px] gap-px border-t border-[#8b0000] pb-px pl-1 text-xs leading-4 font-normal">
          <SlantedTab label="细" active />
          {['诊', '分', '筹', '焰', '指', '财'].map((label) => (
            <SlantedTab key={label} label={label} />
          ))}
        </div>
      </div>
    </aside>
  )
}

function IndexBar() {
  return (
    <div className="grid h-[19px] grid-cols-[338fr_351fr_355fr_151fr] border-t border-[#8b0000] text-sm leading-[18px] font-bold whitespace-nowrap">
      {indices.map((index) => (
        <div key={index.name} className={`grid border-r border-[#8b0000] pr-0.5 pl-px text-right ${index.cols}`}>
          <span className="text-base leading-[18px] font-normal text-[#ffffa0]">{index.name}</span>
          {index.values.map((value) => (
            <span key={value} className="text-[#ff4040]">{value}</span>
          ))}
          <span className="text-[#2ed8ec]"><Amount value={`${index.amount}亿`} /></span>
        </div>
      ))}
      <div className="flex justify-between pl-px">
        <span className="text-base leading-[18px] font-normal text-[#ffffa0]">恒生指数</span>
        <span className="text-[#ff4040]">249</span>
      </div>
    </div>
  )
}

function NewsBar() {
  return (
    <div className="flex h-[19px] border-y border-[#8b0000] text-xs leading-[17px] whitespace-nowrap text-[#c8c8c8]">
      {['手机', '留言', '客服', '解盘', '论股堂', '股灵通', '行情'].map((label) => (
        <button type="button" key={label} className="border-r border-[#8b0000] pr-1 pl-[3px]">{label}</button>
      ))}
      <div className="flex flex-1 justify-between text-[13px] font-bold text-[#ff0]">
        <span>一带一路”</span>
        <span className="text-white">【大数据】抓住两类公告轻松翻倍!</span>
        <span>21:15 周小川谈央行纪检工作：对顶风违纪发现一起查处一起</span>
        <span>20:29 钱坤投资：</span>
      </div>
      <span className="border-l border-[#8b0000] pr-0.5 pl-1">搜</span>
    </div>
  )
}

export default function App() {
  return (
    <div className={`relative min-h-screen bg-[#f6f6f6] ${cjk}`}>
      <div className="mr-1.5 border-l-[3px] border-[#0c4a98] bg-black shadow-[2px_2px_3px_#555]">
        <div className="border-b-4 border-l-[5px] border-[#ddd9cc]">
          <header className="relative flex h-[23px] items-center bg-linear-to-b from-[#f0f0f0] to-[#d2d2d2] pl-1 text-xs">
            <nav className="flex gap-3.5 text-[#a0a090]">
              {menus.map((menu) => (
                <button type="button" key={menu}>{menu}</button>
              ))}
            </nav>
            <div className="ml-[313px] flex items-center gap-1.5 pt-0.5 text-[#444]">
              <span className="rounded-sm bg-white text-base leading-[17px] font-black text-[#d81818] italic">同花顺</span>
              <span>- A股技术分析</span>
            </div>
          </header>
          <Toolbar />
          <div className="flex">
            <SideBar />
            <main className="min-w-0 flex-1">
              <ChartHeader />
              <PriceChart />
              <IndicatorHeader />
              <IndicatorChart />
              <IndicatorTabs />
            </main>
            <QuotePanel />
          </div>
          <IndexBar />
          <NewsBar />
        </div>
      </div>
      <SiteBadge />
      <svg width="12" height="20" viewBox="0 0 12 20" className="absolute top-[396px] right-[26px]">
        <path d="M0 0v16l4-4 3 7 3-1-3-7h5z" fill="#fff" stroke="#000" />
      </svg>
    </div>
  )
}
